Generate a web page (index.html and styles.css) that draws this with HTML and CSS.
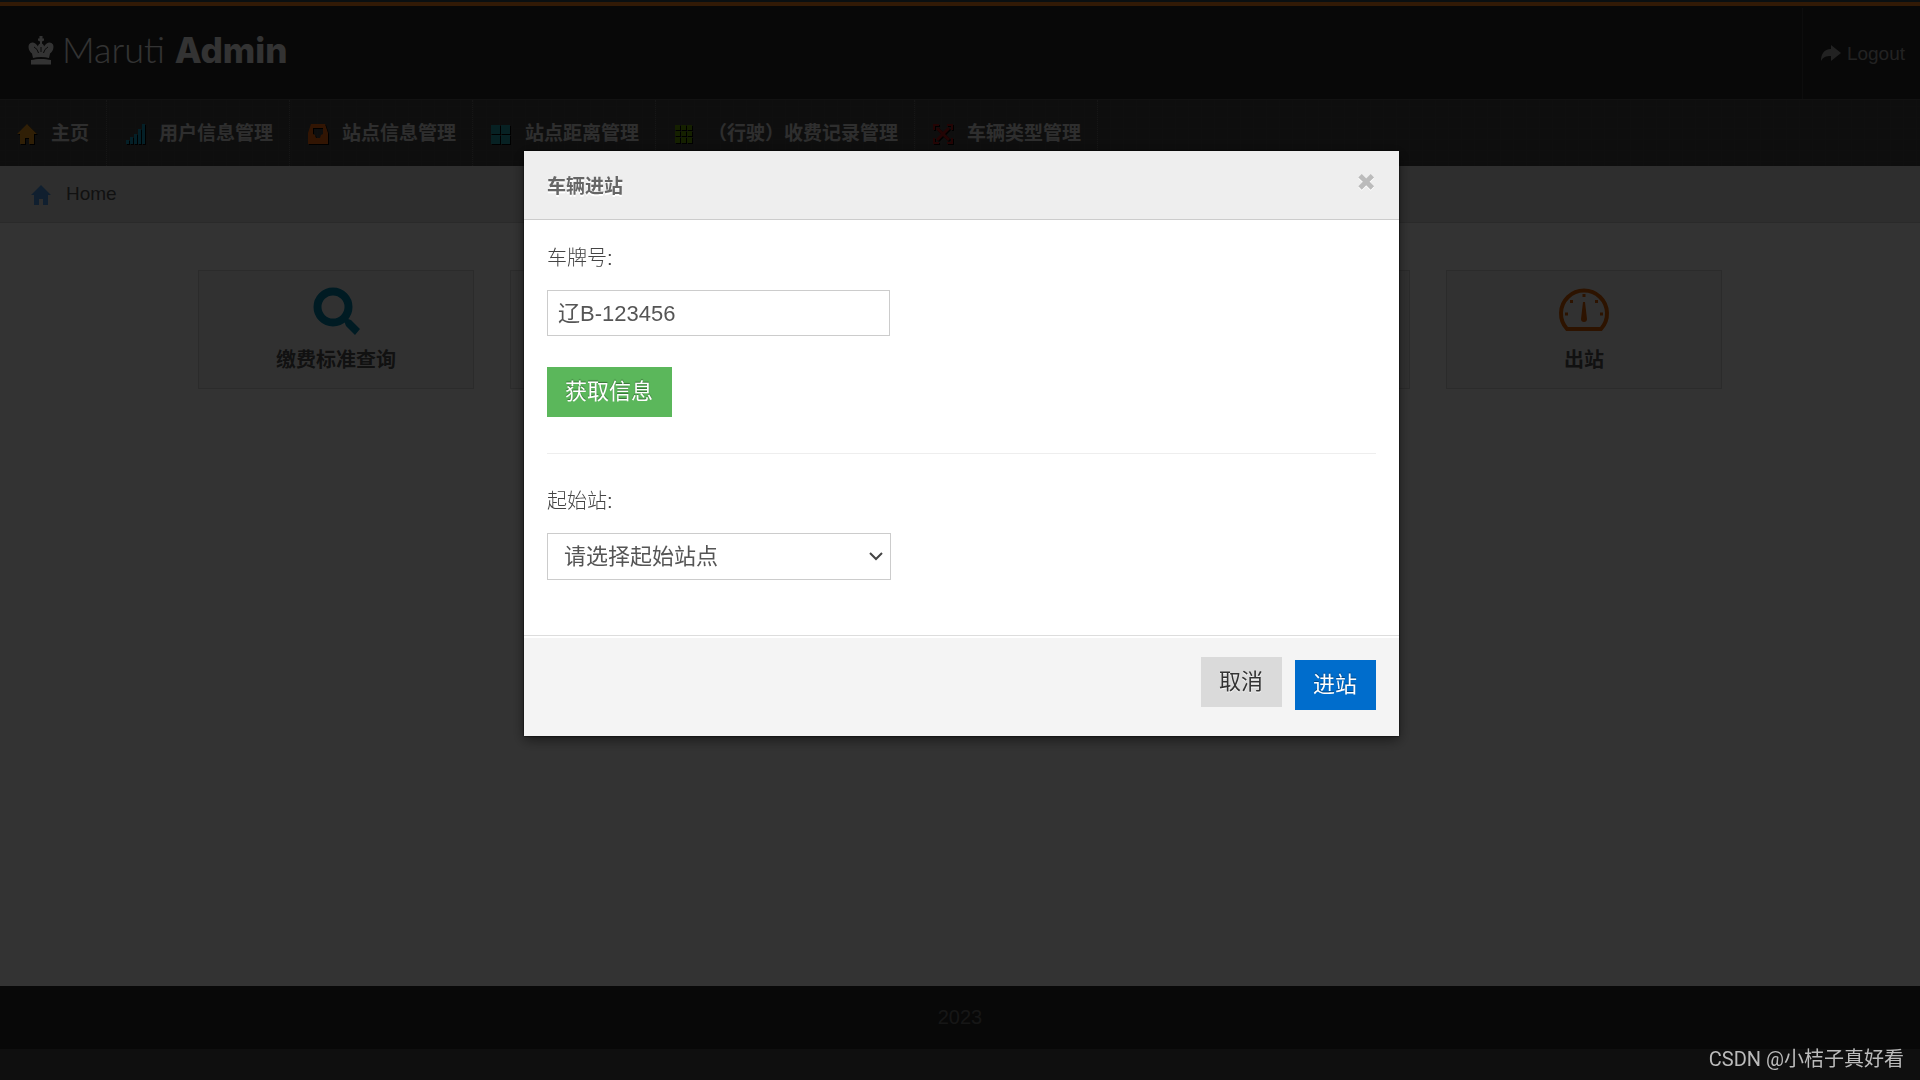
FILE: index.html
```html
<!DOCTYPE html>
<html lang="zh-CN">
<head>
<meta charset="utf-8">
<title>Maruti Admin</title>
<link rel="stylesheet" href="styles.css">
</head>
<body>
<header class="header">
  <h1 class="logo">
    <svg class="logo-icon" viewBox="0 0 26 30" aria-hidden="true"><path d="M11.500 3.500V1h3v2.500H16v2l-2 1v2c1.500 1 2 2 2 3 3-5 7-5 9-2 1.500 4-1 8-3 9l-1 4.500c-5-1.500-11-1.500-16 0l-1-4.500c-2-1-4.500-5-3-9 2-3 6-3 9 2 0-1 .5-2 2-3v-2l-2-1v-2z M3 25c6-1.500 14-1.500 20 0v4.500H3z"/><path class="logo-cut" d="M10.500 18c-1-3-2.500-5-4.500-6M15.500 18c1-3 2.500-5 4.500-6M13 12v5"/></svg>
    <span>Maruti <strong>Admin</strong></span>
  </h1>
  <a class="logout" href="#">
    <svg class="icon" viewBox="0 0 20 20" fill="currentColor" aria-hidden="true"><path d="M10 1l10 8-10 8v-5c-5 0-8 1-10 5C0 10 3 5 10 5z"/></svg>
    <span>Logout</span>
  </a>
</header>
<nav class="nav">
  <a class="nav-item" href="#"><svg class="icon home" viewBox="0 0 20 20"><path d="M10 0L0 10h3v10h5v-6h4v6h5V10h3z"/></svg>主页</a>
  <a class="nav-item" href="#"><svg class="icon signal" viewBox="0 0 20 20"><path d="M1 16h3v4H1zM5 13h3v7H5zM9 10h3v10H9zM13 5h3v15h-3zM17 0h3v20h-3z"/></svg>用户信息管理</a>
  <a class="nav-item" href="#"><svg class="icon inbox" viewBox="0 0 20 20"><path fill-rule="evenodd" d="M3 0h14l3 9v11H0V9zM5 4v6l2 1 1 3h4l1-3 2-1V4z"/></svg>站点信息管理</a>
  <a class="nav-item" href="#"><svg class="icon tiles" viewBox="0 0 20 20"><path d="M0 1h9v9H0zM10 1h9v9h-9zM0 11h9v9H0zM10 11h9v9h-9z"/></svg>站点距离管理</a>
  <a class="nav-item" href="#"><svg class="icon grid" viewBox="0 0 20 20"><path d="M1 1h5v5H1zM7 1h5v5H7zM13 1h5v5h-5zM1 7h5v5H1zM7 7h5v5H7zM13 7h5v5h-5zM1 13h5v6H1zM7 13h5v6H7zM13 13h5v6h-5z"/></svg>（行驶）收费记录管理</a>
  <a class="nav-item" href="#"><svg class="icon expand" viewBox="0 0 20 20"><path d="M1 6V1h5M14 1h5v5M19 14v5h-5M6 19H1v-5"/><path class="cross" d="M4 4l12 12M16 4L4 16"/></svg>车辆类型管理</a>
</nav>
<div class="breadcrumb">
  <a href="#"><svg class="icon crumb-home" viewBox="0 0 20 20"><path d="M10 0L0 10h3v10h5v-6h4v6h5V10h3z"/></svg>Home</a>
</div>
<main class="content">
  <div class="cards">
    <a class="card" href="#">
      <svg class="card-icon search" viewBox="0 0 50 48"><circle cx="22" cy="20" r="15.500"/><path class="handle" d="M32 33l3-3c1 2 3 2 5 3l9 9-5 6-9-9c-1-2-1-4-3-6z"/></svg>
      缴费标准查询
    </a>
    <a class="card" href="#" aria-hidden="true"></a>
    <a class="card" href="#" aria-hidden="true"></a>
    <a class="card" href="#" aria-hidden="true"></a>
    <a class="card" href="#">
      <svg class="card-icon gauge" viewBox="0 0 50 48"><path d="M8 42A23 23 0 1 1 42 42z"/><path class="dots" d="M23.500 7h3v3h-3zM11 13h3v3h-3zM36 13h3v3h-3zM6 25.500h3v3H6zM41 25.500h3v3h-3zM24 15h2l2 17q0 3-3 3t-3-3z"/></svg>
      出站
    </a>
  </div>
</main>
<footer class="footer">2023</footer>

<div class="backdrop">
  <form class="modal" role="dialog" aria-labelledby="modal-title">
    <div class="modal-header">
      <h2 id="modal-title">车辆进站</h2>
      <button class="close" type="button" aria-label="关闭">×</button>
    </div>
    <div class="modal-body">
      <label for="plate">车牌号:</label>
      <input class="field" id="plate" type="text" value="辽B-123456">
      <button class="btn btn-success" type="button">获取信息</button>
      <hr>
      <label for="start">起始站:</label>
      <div class="select">
        <select class="field" id="start"><option>请选择起始站点</option></select>
        <svg class="chevron" viewBox="0 0 14 9" aria-hidden="true"><path d="M1 1l6 6 6-6"/></svg>
      </div>
    </div>
    <div class="modal-footer">
      <button class="btn" type="button">取消</button>
      <button class="btn btn-primary" type="submit">进站</button>
    </div>
  </form>
</div>
<div class="watermark">CSDN @小桔子真好看</div>
</body>
</html>
```
FILE: styles.css
```css
* { box-sizing: border-box; }

body {
  margin: 0;
  min-height: 100vh;
  display: flex;
  flex-direction: column;
  background: #4d4d4d;
  color: #666;
  font: 20px/34px "Liberation Sans", "Noto Sans CJK SC", sans-serif;
}

a { color: inherit; text-decoration: none; }
.icon { width: 20px; height: 20px; flex: none; }

.header {
  height: 99px;
  display: flex;
  justify-content: space-between;
  background: #282828;
  border-top: 2px solid #354a58;
  box-shadow: inset 0 4px #f8821e;
}

.logo {
  margin: 0;
  padding: 0 0 2px 28px;
  display: flex;
  align-items: center;
  gap: 8px;
  color: #fff;
  font: 300 36px/48px Lato, sans-serif;
}
.logo strong { font: 800 35px/48px Inter, sans-serif; }
.logo-icon { width: 26px; height: 30px; fill: #fff; }
.logo-cut { fill: none; stroke: #282828; stroke-width: 1; }

.logout {
  margin-top: 6px;
  padding: 0 15px 0 18px;
  display: flex;
  align-items: center;
  gap: 6px;
  border-left: 1px solid #404040;
  color: #aaa;
  font-size: 19px;
}

.nav {
  height: 67px;
  display: flex;
  background:
    repeating-linear-gradient(90deg, #0000 0 5px, #ffffff06 5px 6px, #0000 6px 13px),
    repeating-linear-gradient(#0000 0 6px, #ffffff06 6px 7px, #0000 7px 11px),
    #464646;
  border-top: 1px solid #5a5a5a;
}
.nav-item {
  padding: 2px 16px 0 18px;
  display: flex;
  align-items: center;
  gap: 14px;
  border-right: 1px dotted #707070;
  color: #e6e6e6;
  font-size: 19px;
  font-weight: 700;
}
.nav-item:first-child { padding-left: 17px; padding-right: 17px; }
.nav-item .icon { filter: drop-shadow(1px 1px 0 #000); }
.home { fill: #f09a1e; }
.signal { fill: #18a0c8; }
.inbox { fill: #f86b10; }
.tiles { fill: #24a3ae; }
.grid { fill: #6a9e00; }
.expand { fill: none; stroke: #b01818; stroke-width: 2; }
.cross { stroke-width: 3; }

.breadcrumb {
  height: 57px;
  padding: 13px 31px;
  background: #e5e5e5;
  border-bottom: 1px solid #d2d2d2;
  color: #555;
  font-size: 19px;
  line-height: 30px;
}
.breadcrumb a { display: inline-flex; align-items: center; gap: 15px; }
.crumb-home { fill: #4f9be8; margin-top: 2px; }

.content { flex: 1; padding: 47px 5% 0; background: #fff; }
.cards { display: flex; justify-content: center; gap: 36px; }
.card {
  flex: 0 1 276px;
  height: 119px;
  padding: 16px 10px;
  display: flex;
  flex-direction: column;
  align-items: center;
  gap: 10px;
  background: #f5f5f5;
  border: 1px solid #d6d6d6;
  color: #555;
  font-weight: 700;
  line-height: 30px;
}
.card-icon { width: 50px; height: 48px; fill: none; overflow: visible; }
.search circle { stroke: #0088b0; stroke-width: 8; }
.search .handle { fill: #0088b0; }
.gauge path { stroke: #e06000; stroke-width: 4; }
.gauge .dots { fill: #e06000; stroke: none; }

.footer {
  height: 63px;
  margin-bottom: 31px;
  background: #282828;
  color: #707070;
  line-height: 62px;
  text-align: center;
}

.backdrop {
  position: fixed;
  inset: 0;
  padding: 151px 20px 20px 23px;
  background: rgba(0, 0, 0, .8);
}

.modal {
  max-width: 875px;
  margin: 0 auto;
  background: #fff;
  box-shadow: 0 4px 12px rgba(0, 0, 0, .5), 0 0 2px #000;
}
.modal-header {
  padding: 17px 23px;
  display: flex;
  justify-content: space-between;
  background: #eee;
  border-bottom: 1px solid #ccc;
}
.modal-header h2 {
  margin: 0;
  font-size: 19px;
  line-height: 38px;
  height: 34px;
  color: #666;
  text-shadow: 0 2px 0 #fff;
}
.close {
  height: 24px;
  padding: 0;
  border: 0;
  background: none;
  color: #bbb;
  font: 900 28px/24px Inter, sans-serif;
  text-shadow: 0 1px 0 #fff;
}
.modal-body { padding: 21px 23px 55px; }
.modal-body label {
  display: block;
  margin-bottom: 15px;
  color: #444;
  font-weight: 300;
}
.field {
  display: block;
  width: 343px;
  height: 46px;
  padding: 0 10px 4px;
  border: 1px solid #ccc;
  border-radius: 0;
  background: #fff;
  color: #555;
  font: 22px "Liberation Sans", "Noto Sans CJK SC", sans-serif;
}
.select { display: flex; align-items: center; }
.select .field { appearance: none; width: 344px; height: 47px; padding: 0 16px 1px; }
.chevron {
  width: 14px;
  height: 9px;
  margin-left: -22px;
  fill: none;
  stroke: #444;
  stroke-width: 2;
  pointer-events: none;
}
.btn {
  height: 50px;
  padding: 0 19px 0 18px;
  border: 0;
  background: #dadada;
  color: #333;
  font: 22px/50px "Liberation Sans", "Noto Sans CJK SC", sans-serif;
  text-shadow: 0 1px 1px #fff;
}
.btn-success, .btn-primary { color: #fff; text-shadow: 0 -1px 1px rgba(0, 0, 0, .4); }
.btn-success { margin-top: 31px; background: #5bb75b; }
.btn-primary { background: #006dcc; margin-top: 3px; }
hr { margin: 36px 0 30px; border: 0; border-top: 1px solid #eee; }

.modal-footer {
  padding: 21px 23px 26px;
  display: flex;
  align-items: flex-start;
  justify-content: flex-end;
  gap: 13px;
  background: #f4f4f4;
  border-top: 1px solid #ddd;
  box-shadow: inset 0 2px #fff;
}

.watermark {
  position: fixed;
  right: 16px;
  bottom: 4px;
  color: #bbb;
  font: 20px/34px Roboto, "Noto Sans CJK SC", sans-serif;
}
```
